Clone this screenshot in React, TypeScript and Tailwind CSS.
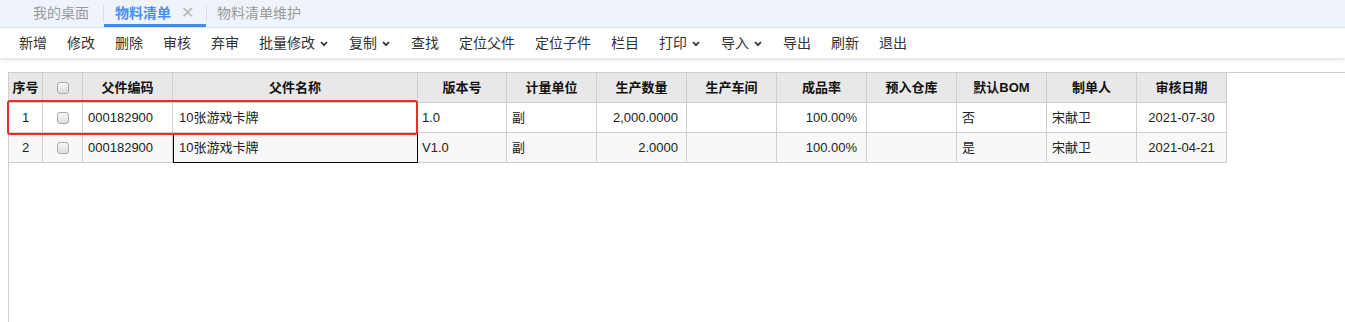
import React from "react";

const font = { fontFamily: '"Liberation Sans", "Noto Sans CJK SC", sans-serif' };

function Chevron() {
  return (
    <svg width="10" height="6" viewBox="0 0 10 6" className="ml-[4px] mt-[1px]">
      <polyline points="2,1 5,4.2 8,1" fill="none" stroke="#333" strokeWidth="1.8" />
    </svg>
  );
}

function Checkbox() {
  return (
    <div className="h-[12px] w-[12px] rounded-[3px] border border-[#a9a9a9] bg-gradient-to-b from-[#f7f7f7] to-[#dedede]" />
  );
}

type Col = { key: string; title: string; w: string; align: "left" | "right" | "center"; pad: string };

const cols: Col[] = [
  { key: "no", title: "序号", w: "w-[34px]", align: "center", pad: "" },
  { key: "cb", title: "", w: "w-[40px]", align: "center", pad: "" },
  { key: "code", title: "父件编码", w: "w-[90px]", align: "left", pad: "pl-[5px]" },
  { key: "name", title: "父件名称", w: "w-[245px]", align: "left", pad: "pl-[6px]" },
  { key: "ver", title: "版本号", w: "w-[89px]", align: "left", pad: "pl-[4px]" },
  { key: "unit", title: "计量单位", w: "w-[90px]", align: "left", pad: "pl-[5px]" },
  { key: "qty", title: "生产数量", w: "w-[90px]", align: "right", pad: "pr-[8px]" },
  { key: "ws", title: "生产车间", w: "w-[90px]", align: "left", pad: "pl-[5px]" },
  { key: "rate", title: "成品率", w: "w-[90px]", align: "right", pad: "pr-[9px]" },
  { key: "wh", title: "预入仓库", w: "w-[90px]", align: "left", pad: "pl-[5px]" },
  { key: "bom", title: "默认BOM", w: "w-[90px]", align: "left", pad: "pl-[5px]" },
  { key: "maker", title: "制单人", w: "w-[90px]", align: "left", pad: "pl-[5px]" },
  { key: "date", title: "审核日期", w: "w-[90px]", align: "center", pad: "" },
];

const rows: Record<string, string>[] = [
  { no: "1", code: "000182900", name: "10张游戏卡牌", ver: "1.0", unit: "副", qty: "2,000.0000", ws: "", rate: "100.00%", wh: "", bom: "否", maker: "宋献卫", date: "2021-07-30" },
  { no: "2", code: "000182900", name: "10张游戏卡牌", ver: "V1.0", unit: "副", qty: "2.0000", ws: "", rate: "100.00%", wh: "", bom: "是", maker: "宋献卫", date: "2021-04-21" },
];

const alignCls = (a: string) =>
  a === "center" ? "justify-center" : a === "right" ? "justify-end" : "justify-start";

const tools: { label: string; dd?: boolean }[] = [
  { label: "新增" },
  { label: "修改" },
  { label: "删除" },
  { label: "审核" },
  { label: "弃审" },
  { label: "批量修改", dd: true },
  { label: "复制", dd: true },
  { label: "查找" },
  { label: "定位父件" },
  { label: "定位子件" },
  { label: "栏目" },
  { label: "打印", dd: true },
  { label: "导入", dd: true },
  { label: "导出" },
  { label: "刷新" },
  { label: "退出" },
];

export default function App() {
  return (
    <div className="relative h-[322px] w-[1345px] overflow-hidden bg-white flex flex-col" style={font}>
      {/* Tab bar */}
      <div className="flex h-[28px] shrink-0 items-stretch border-b border-[#dfe4ec] bg-[#eff4fc] text-[14px]">
        <div className="flex items-center pl-[33px] pr-[14px] text-[#9a9a9a]">我的桌面</div>
        <div className="my-[5px] w-px bg-[#d8dde6]" />
        <div className="flex items-center border-b-[3px] border-[#3d8bf7] pl-[11px] pr-[12px] pt-[2px]">
          <span className="font-bold text-[#4a8cf5]">物料清单</span>
          <span className="ml-[10px] text-[16px] leading-none text-[#b5b5b5]">✕</span>
        </div>
        <div className="my-[5px] w-px bg-[#d8dde6]" />
        <div className="flex items-center pl-[10px] text-[#9a9a9a]">物料清单维护</div>
      </div>

      {/* Toolbar */}
      <div className="relative z-10 flex h-[30px] shrink-0 items-center bg-white pl-[9px] text-[14px] text-[#333] shadow-[0_2px_4px_rgba(0,0,0,0.12)]">
        {tools.map((t) => (
          <div key={t.label} className="flex items-center px-[10px]">
            <span>{t.label}</span>
            {t.dd && <Chevron />}
          </div>
        ))}
      </div>

      {/* Grid */}
      <div className="ml-[8px] mt-[14px] flex-1 border-l border-t border-[#cfcfcf] text-[13px] text-[#222]">
        <div className="flex w-max">
          {cols.map((c) => (
            <div
              key={c.key}
              className={`${c.w} flex h-[30px] shrink-0 items-center justify-center border-b border-r border-[#cfcfcf] bg-[#e8e8e8] font-bold text-[#111]`}
            >
              {c.key === "cb" ? <Checkbox /> : c.title}
            </div>
          ))}
        </div>
        {rows.map((r, i) => (
          <div key={i} className={`flex w-max ${i === 1 ? "bg-[#f8f8f8]" : "bg-white"}`}>
            {cols.map((c) => {
              const selected = i === 1 && c.key === "name";
              return (
                <div
                  key={c.key}
                  className={`${c.w} ${c.pad} ${alignCls(c.align)} flex h-[30px] shrink-0 items-center border-b border-r border-[#cfcfcf] ${
                    selected ? "border-black shadow-[inset_1px_1px_0_#000]" : ""
                  } ${c.key === "name" && i === 0 ? "bg-white" : ""}`}
                >
                  {c.key === "cb" ? <Checkbox /> : r[c.key]}
                </div>
              );
            })}
          </div>
        ))}
      </div>

      {/* Red annotation box */}
      <div className="pointer-events-none absolute left-[7px] top-[100px] h-[35px] w-[411px] rounded-[3px] border-2 border-[#f42a2a]" />
    </div>
  );
}
